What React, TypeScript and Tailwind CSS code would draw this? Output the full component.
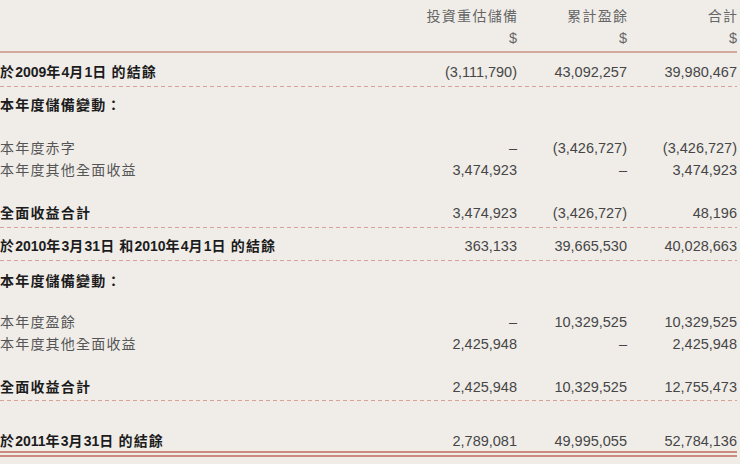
const dashed =
  'h-px w-full bg-[linear-gradient(to_right,#d9a196_4px,transparent_4px)] bg-[length:7px_1px] bg-repeat-x';

function Label({ text, bold }: { text: string; bold?: boolean }) {
  // CJK runs get a little tracking, latin digits stay tight
  const parts = text.split(/([\u3000-\u9fff\uff00-\uffef]+)/).filter(Boolean);
  return (
    <span className={bold ? 'font-bold text-[#1c1c1c]' : 'text-[#555555]'}>
      {parts.map((p, i) =>
        /[\u3000-\u9fff\uff00-\uffef]/.test(p) ? (
          <span key={i} className="tracking-[1.2px]">{p}</span>
        ) : (
          <span key={i} className="tracking-normal text-[14px]">{p}</span>
        )
      )}
    </span>
  );
}

function Row({
  label,
  values,
  bold,
  className = '',
}: {
  label: string;
  values?: string[];
  bold?: boolean;
  className?: string;
}) {
  return (
    <div className={`grid grid-cols-[1fr_110px_110px_110px] h-[22px] items-center leading-[22px] ${className}`}>
      <div className="text-[14px] whitespace-pre">
        <Label text={label} bold={bold} />
      </div>
      {(values ?? ['', '', '']).map((v, i) => (
        <div key={i} className="text-right text-[14.5px] text-[#464646] font-['Liberation_Sans',sans-serif]">
          {v}
        </div>
      ))}
    </div>
  );
}

export default function App() {
  return (
    <div className="w-[740px] h-[464px] bg-[#f0ede9] overflow-hidden font-['Liberation_Sans','Noto_Sans_CJK_TC',sans-serif]">
      <div className="w-[737px]">
        {/* column heads */}
        <div className="grid grid-cols-[1fr_110px_110px_110px] pt-[6px] pb-[3px] leading-[21px] text-[#666666]">
          <div />
          {['投資重估儲備', '累計盈餘', '合計'].map((h) => (
            <div key={h} className="text-right">
              <div className="text-[14px] tracking-[1.3px] mr-[-1.3px]">{h}</div>
              <div className="text-[14.5px] font-['Liberation_Sans',sans-serif] translate-y-px">$</div>
            </div>
          ))}
        </div>
        <div className="h-[2px] bg-[#d4aa9f]" />

        <Row className="mt-[8px]" bold label="於2009年4月1日 的結餘" values={['(3,111,790)', '43,092,257', '39,980,467']} />
        <div className={`mt-[3px] ${dashed}`} />

        <Row className="mt-[7px]" bold label="本年度儲備變動：" />
        <Row className="mt-[21px]" label="本年度赤字" values={['–', '(3,426,727)', '(3,426,727)']} />
        <Row label="本年度其他全面收益" values={['3,474,923', '–', '3,474,923']} />
        <Row className="mt-[21px]" bold label="全面收益合計" values={['3,474,923', '(3,426,727)', '48,196']} />
        <div className={`mt-[3px] ${dashed}`} />

        <Row className="mt-[7px]" bold label="於2010年3月31日 和2010年4月1日 的結餘" values={['363,133', '39,665,530', '40,028,663']} />
        <div className={`mt-[3px] ${dashed}`} />

        <Row className="mt-[9px]" bold label="本年度儲備變動：" />
        <Row className="mt-[19px]" label="本年度盈餘" values={['–', '10,329,525', '10,329,525']} />
        <Row label="本年度其他全面收益" values={['2,425,948', '–', '2,425,948']} />
        <Row className="mt-[21px]" bold label="全面收益合計" values={['2,425,948', '10,329,525', '12,755,473']} />
        <div className={`mt-[2px] ${dashed}`} />

        <Row className="mt-[29px]" bold label="於2011年3月31日 的結餘" values={['2,789,081', '49,995,055', '52,784,136']} />
        <div className="-mt-[1px] h-[2px] bg-[#cd8b7d]" />
        <div className="mt-[2px] h-[2px] bg-[#cd8b7d]" />
      </div>
    </div>
  );
}
